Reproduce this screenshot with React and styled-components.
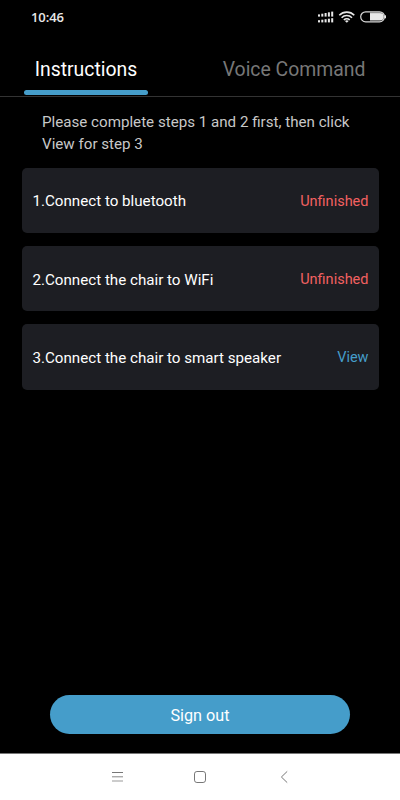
import { useState } from "react"
import styled, { createGlobalStyle } from "styled-components";

const GlobalStyle = createGlobalStyle`
  * {
    box-sizing: border-box;
  }
  body {
    margin: 0;
    background: #000;
    font-family: Roboto, "Liberation Sans", sans-serif;
  }
  button {
    font-family: inherit;
    border: none;
    background: none;
    padding: 0;
    cursor: pointer;
  }
`

const Screen = styled.div`
  display: flex;
  flex-direction: column;
  height: 800px;
  background: #000;
`

const StatusBar = styled.header`
  display: flex;
  align-items: center;
  justify-content: space-between;
  height: 34px;
  padding: 0 13px 0 31px;
`

const Time = styled.span`
  font-family: "Open Sans", sans-serif;
  font-size: 13px;
  font-weight: 600;
  line-height: 18px;
  letter-spacing: -0.1px;
  color: #e8e8e8;
`

const StatusIcons = styled.svg`
  display: block;
  width: 70px;
  height: 14px;
`

const Tabs = styled.nav`
  display: flex;
  justify-content: space-between;
  height: 63px;
  padding: 0 34.5px 0 24px;
  border-bottom: 1px solid #333;
`

const Tab = styled.button`
  display: flex;
  flex-direction: column;
  align-items: center;
  justify-content: space-between;
  padding: 24px 0 1px;
  font-size: 19.4px;
  line-height: 24px;
  color: ${(props) => (props.$active ? '#fff' : '#777')};
`

const Indicator = styled.span`
  width: 124px;
  height: 5px;
  border-radius: 3px;
  background: #459dca;
`

const Hint = styled.p`
  margin: 14px 42px 12.5px;
  font-size: 15.15px;
  line-height: 22px;
  color: #c8c8c8;
`

const StepList = styled.ul`
  display: flex;
  flex-direction: column;
  gap: 12.4px;
  margin: 0;
  padding: 0 21px 0 21.5px;
  list-style: none;
`

const Step = styled.li`
  display: flex;
  align-items: center;
  justify-content: space-between;
  height: 65.8px;
  padding: 2px 10.5px 0 11px;
  border-radius: 5px;
  background: #1d1e23;
`

const StepTitle = styled.span`
  font-size: 15.15px;
  line-height: 18px;
  color: #fff;
`

const StepAction = styled.button`
  font-size: 14.5px;
  line-height: 19px;
  color: ${(props) => (props.$done ? '#459dca' : '#f26161')};
`

const SignOut = styled.button`
  width: 300px;
  height: 39px;
  margin: auto auto 19px;
  padding-top: 2px;
  border-radius: 20px;
  background: #459dca;
  font-size: 16.2px;
  color: #fff;
`

const NavBar = styled.footer`
  display: flex;
  justify-content: center;
  gap: 67px;
  height: 47px;
  padding-top: 15px;
  border-top: 1px solid #777;
  background: #fff;
`

const NavButton = styled.button`
  width: 16px;
  height: 16px;

  svg {
    display: block;
    fill: none;
    stroke: #777;
  }
`

const steps = [
  { title: '1.Connect to bluetooth', action: 'Unfinished' },
  { title: '2.Connect the chair to WiFi', action: 'Unfinished' },
  { title: '3.Connect the chair to smart speaker', action: 'View', done: true },
]

const tabs = ['Instructions', 'Voice Command']

const signalBars = [0, 1, 2, 3, 4]

const Status = () => (
  <StatusBar>
    <Time>10:46</Time>
    <StatusIcons viewBox="0 0 70 14">
      {/* two sim cards */}
      {signalBars.map((i) => (
        <g key={i} fill="#e8e8e8">
          <rect x={1 + i * 3.3} y={4.4 - i * 0.7} width="2" height={2.2 + i * 0.7} />
          <rect x={1 + i * 3.3} y={10.2 - i * 0.5} width="2" height={2.2 + i * 0.5} />
        </g>
      ))}
      <g fill="none" stroke="#e8e8e8" strokeWidth="1.6">
        <path d="M22.3 5.2 A10.6 10.6 0 0 1 37.3 5.2" />
        <path d="M24.6 7.7 A7.3 7.3 0 0 1 35 7.7" />
        <path d="M26.9 10 A4 4 0 0 1 32.7 10" />
      </g>
      <path d="M27.9 10.9 Q29.8 9.4 31.7 10.9 L29.8 12.8 Z" fill="#e8e8e8" />
      <rect x="43.7" y="1.8" width="23.8" height="10" rx="5" fill="none" stroke="#d8d8d8" strokeWidth="1.2" />
      <path d="M53 3 H63 A3.8 3.8 0 0 1 63 10.6 H53 Z" fill="#e8e8e8" />
      <path d="M53 2.8 H64" stroke="#aaa" />
      <path d="M68.5 5.3 V8.3" stroke="#e8e8e8" />
    </StatusIcons>
  </StatusBar>
)

const App = () => {
  const [active, setActive] = useState('Instructions');

  return (
    <>
      <GlobalStyle />
      <Screen>
        <Status />
        <Tabs>
          {tabs.map((tab) => (
            <Tab key={tab} $active={tab === active} onClick={() => setActive(tab)}>
              {tab}
              {tab === active && <Indicator />}
            </Tab>
          ))}
        </Tabs>

        <Hint>Please complete steps 1 and 2 first, then click View for step 3</Hint>

        <StepList>
          {steps.map((step) => (
            <Step key={step.title}>
              <StepTitle>{step.title}</StepTitle>
              <StepAction $done={step.done}>{step.action}</StepAction>
            </Step>
          ))}
        </StepList>

        <SignOut>Sign out</SignOut>

        <NavBar>
          <NavButton aria-label="Menu">
            <svg width="16" height="16" viewBox="0 0 16 16">
              <path d="M3 3.5 H14" />
              <path d="M3 7.8 H14" stroke="#888" />
              <path d="M3 12 H14" stroke="#999" />
            </svg>
          </NavButton>
          <NavButton aria-label="Home">
            <svg width="16" height="16" viewBox="0 0 16 16">
              <rect x="2.5" y="2.5" width="11" height="11" rx="2.4" />
            </svg>
          </NavButton>
          <NavButton aria-label="Back">
            <svg width="16" height="16" viewBox="0 0 16 16">
              <path d="M12.2 2.4 L6.4 8 L12.2 13.6" />
            </svg>
          </NavButton>
        </NavBar>
      </Screen>
    </>
  )
}

export default App
